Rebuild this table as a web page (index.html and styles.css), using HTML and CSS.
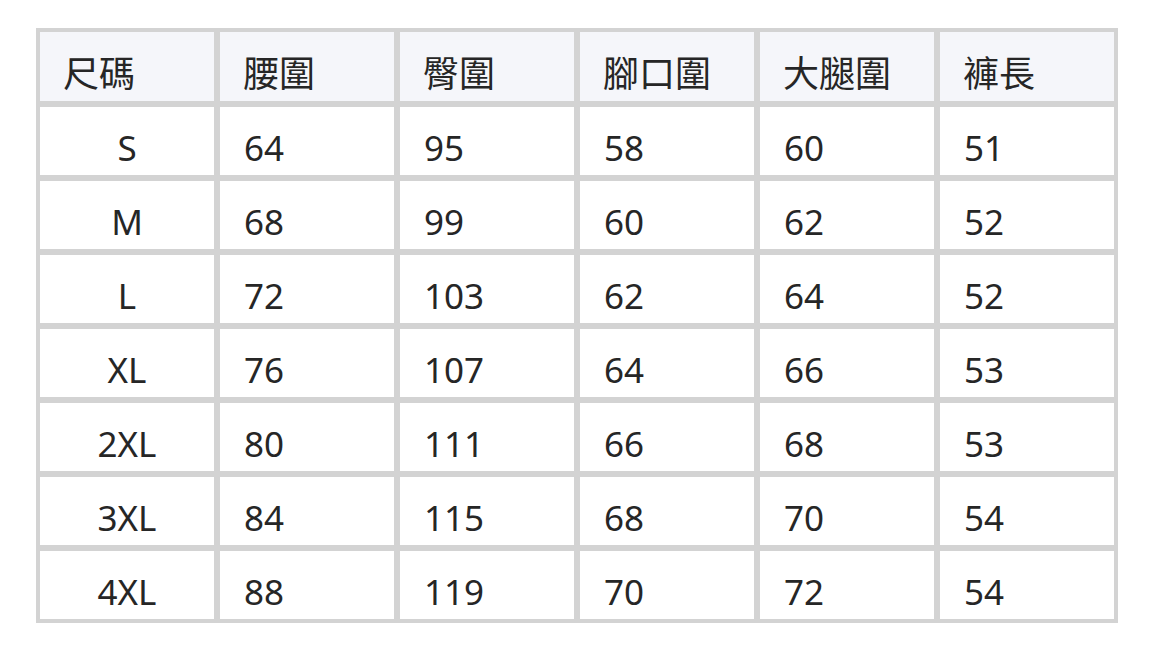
FILE: index.html
```html
<!DOCTYPE html>
<html lang="zh-Hant">
<head>
<meta charset="utf-8">
<title>尺碼表</title>
<link rel="stylesheet" href="styles.css">
</head>
<body>
<div class="size-table" role="table">
  <div class="cell head">尺碼</div>
  <div class="cell head">腰圍</div>
  <div class="cell head">臀圍</div>
  <div class="cell head">腳口圍</div>
  <div class="cell head">大腿圍</div>
  <div class="cell head">褲長</div>

  <div class="cell size">S</div><div class="cell">64</div><div class="cell">95</div><div class="cell">58</div><div class="cell">60</div><div class="cell">51</div>
  <div class="cell size">M</div><div class="cell">68</div><div class="cell">99</div><div class="cell">60</div><div class="cell">62</div><div class="cell">52</div>
  <div class="cell size">L</div><div class="cell">72</div><div class="cell">103</div><div class="cell">62</div><div class="cell">64</div><div class="cell">52</div>
  <div class="cell size">XL</div><div class="cell">76</div><div class="cell">107</div><div class="cell">64</div><div class="cell">66</div><div class="cell">53</div>
  <div class="cell size">2XL</div><div class="cell">80</div><div class="cell">111</div><div class="cell">66</div><div class="cell">68</div><div class="cell">53</div>
  <div class="cell size">3XL</div><div class="cell">84</div><div class="cell">115</div><div class="cell">68</div><div class="cell">70</div><div class="cell">54</div>
  <div class="cell size">4XL</div><div class="cell">88</div><div class="cell">119</div><div class="cell">70</div><div class="cell">72</div><div class="cell">54</div>
</div>
</body>
</html>
```

FILE: styles.css
```css
html, body {
  margin: 0;
  padding: 0;
  background: #ffffff;
}

body {
  font-family: "Noto Sans", "Noto Sans CJK TC", sans-serif;
  color: #262626;
}

.size-table {
  display: grid;
  grid-template-columns: repeat(6, 174px);
  grid-template-rows: 69px repeat(7, 68px);
  gap: 6px;
  padding: 4px;
  width: max-content;
  margin: 28px 0 0 36px;
  background: #d3d3d3;
}

.cell {
  display: flex;
  align-items: center;
  background: #ffffff;
  padding: 13px 0 0 24px;
  box-sizing: border-box;
  font-size: 35px;
  line-height: 1;
  white-space: nowrap;
}

.cell.head {
  background: #f5f6fa;
  padding-top: 15px;
  padding-left: 23px;
  font-size: 36px;
}

.cell.size {
  justify-content: center;
  padding-left: 0;
}
```
